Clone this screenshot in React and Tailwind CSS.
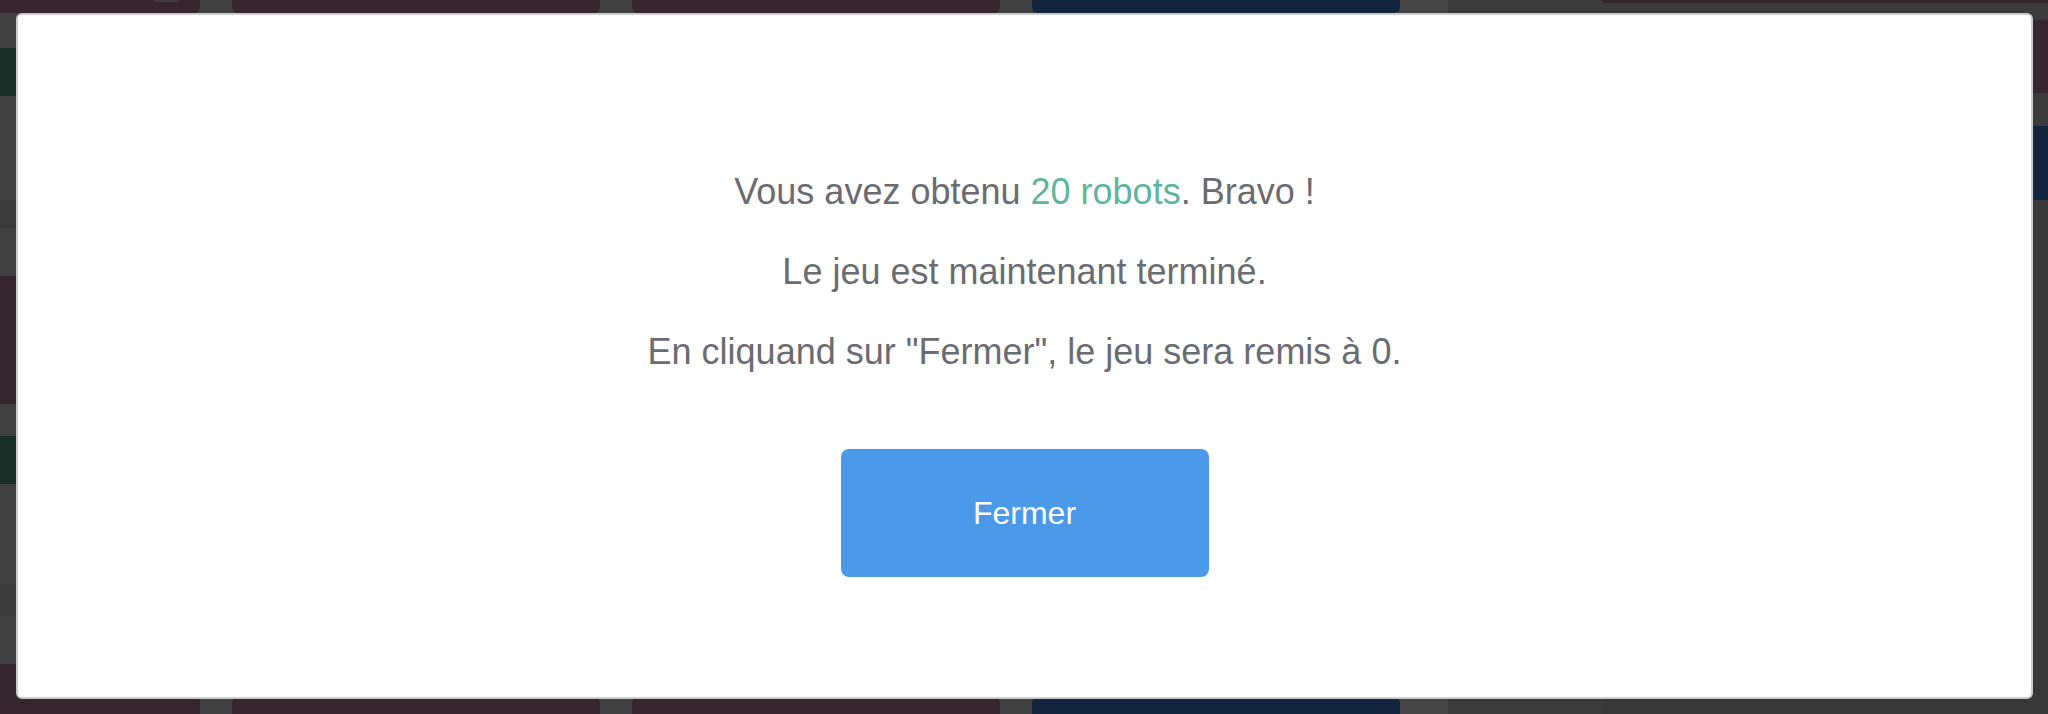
import React from 'react';

// bandes visibles du tableau derrière la fenêtre (couleurs déjà assombries par le voile)
const leftColumnBlocks = [
  { h: 'h-[13px]', bg: 'bg-[#35252c]', round: 'rounded-b-[6px]' },
  { h: 'h-[35px]', bg: 'bg-[#404040]' },
  { h: 'h-[48px]', bg: 'bg-[#1b2f29]' },
  { h: 'h-[104px]', bg: 'bg-[#404040]', text: 'e', textColor: 'text-[#1c1c1c]' },
  { h: 'h-[28px]', bg: 'bg-[#3a3a3a]' },
  { h: 'h-[48px]', bg: 'bg-[#404040]' },
  { h: 'h-[128px]', bg: 'bg-[#35252c]', text: 'e', textColor: 'text-[#4a4a4a]' },
  { h: 'h-[32px]', bg: 'bg-[#404040]' },
  { h: 'h-[48px]', bg: 'bg-[#1b2f29]' },
  { h: 'h-[100px]', bg: 'bg-[#404040]', text: 'a', textColor: 'text-[#1c1c1c]' },
  { h: 'h-[32px]', bg: 'bg-[#3a3a3a]' },
  { h: 'h-[48px]', bg: 'bg-[#404040]' },
  { h: 'flex-1', bg: 'bg-[#35252c]' },
];

const BoardColumn = ({ color }) => (
  <div className="w-[368px] shrink-0 flex flex-col justify-between">
    <div className={`h-[13px] rounded-b-[6px] ${color}`} />
    <div className={`h-[17px] rounded-t-[6px] ${color}`} />
  </div>
);

const Background = () => (
  <div className="w-full h-full flex bg-[#404040]">
    <div className="flex gap-8 -ml-[168px]">
      <div className="w-[368px] shrink-0 flex flex-col relative">
        {leftColumnBlocks.map((b, i) => (
          <div key={i} className={`${b.h} ${b.bg} ${b.round || ''} flex items-center justify-end pr-[352px]`}>
            {b.text && (
              <span className={`text-[36px] leading-none ${b.textColor} font-['Liberation_Sans',sans-serif] -mr-[12px]`}>
                {b.text}
              </span>
            )}
          </div>
        ))}
        <div className="absolute top-0 left-[321px] w-[26px] h-[2px] rounded-b-[3px] bg-[#3f3c3e]" />
      </div>
      <BoardColumn color="bg-[#35252c]" />
      <BoardColumn color="bg-[#35252c]" />
      <BoardColumn color="bg-[#13263d]" />
    </div>
    <div className="w-[48px] shrink-0 bg-[#454545]" />
    <div className="flex-1 flex bg-[#3b3b3b]">
      <div className="w-[154px] shrink-0" />
      <div className="flex-1 flex flex-col">
        <div className="h-[3px] rounded-bl-[6px] bg-[#35252c]" />
        <div className="h-[17px]" />
        <div className="h-[73px] rounded-l-[6px] bg-[#35252c]" />
        <div className="h-[33px]" />
        <div className="h-[74px] rounded-l-[6px] bg-[#13263d]" />
        <div className="flex-1 bg-[#383838]" />
      </div>
    </div>
  </div>
);

const EndGameModal = () => (
  <div className="absolute left-[16px] top-[13px] w-[2017px] h-[686px] bg-white rounded-[6px] border-2 border-[#cbcbcb] flex flex-col items-center pt-[153px] font-['Liberation_Sans',Arial,sans-serif]">
    <p className="text-[36px] leading-[48px] text-[#6b6b72]">
      Vous avez obtenu <span className="text-[#5eb59b]">20 robots</span>. Bravo !
    </p>
    <p className="mt-8 text-[36px] leading-[48px] text-[#6b6b72]">
      Le jeu est maintenant terminé.
    </p>
    <p className="mt-8 text-[36px] leading-[48px] text-[#6b6b72]">
      En cliquand sur "Fermer", le jeu sera remis à 0.
    </p>
    <button
      type="button"
      className="mt-[73px] w-[368px] h-[128px] rounded-[8px] bg-[#4a9ae9] text-white text-[32px]"
    >
      Fermer
    </button>
  </div>
);

export default function App() {
  return (
    <div className="relative w-[2048px] h-[714px] overflow-hidden">
      <Background />
      <EndGameModal />
    </div>
  );
}
